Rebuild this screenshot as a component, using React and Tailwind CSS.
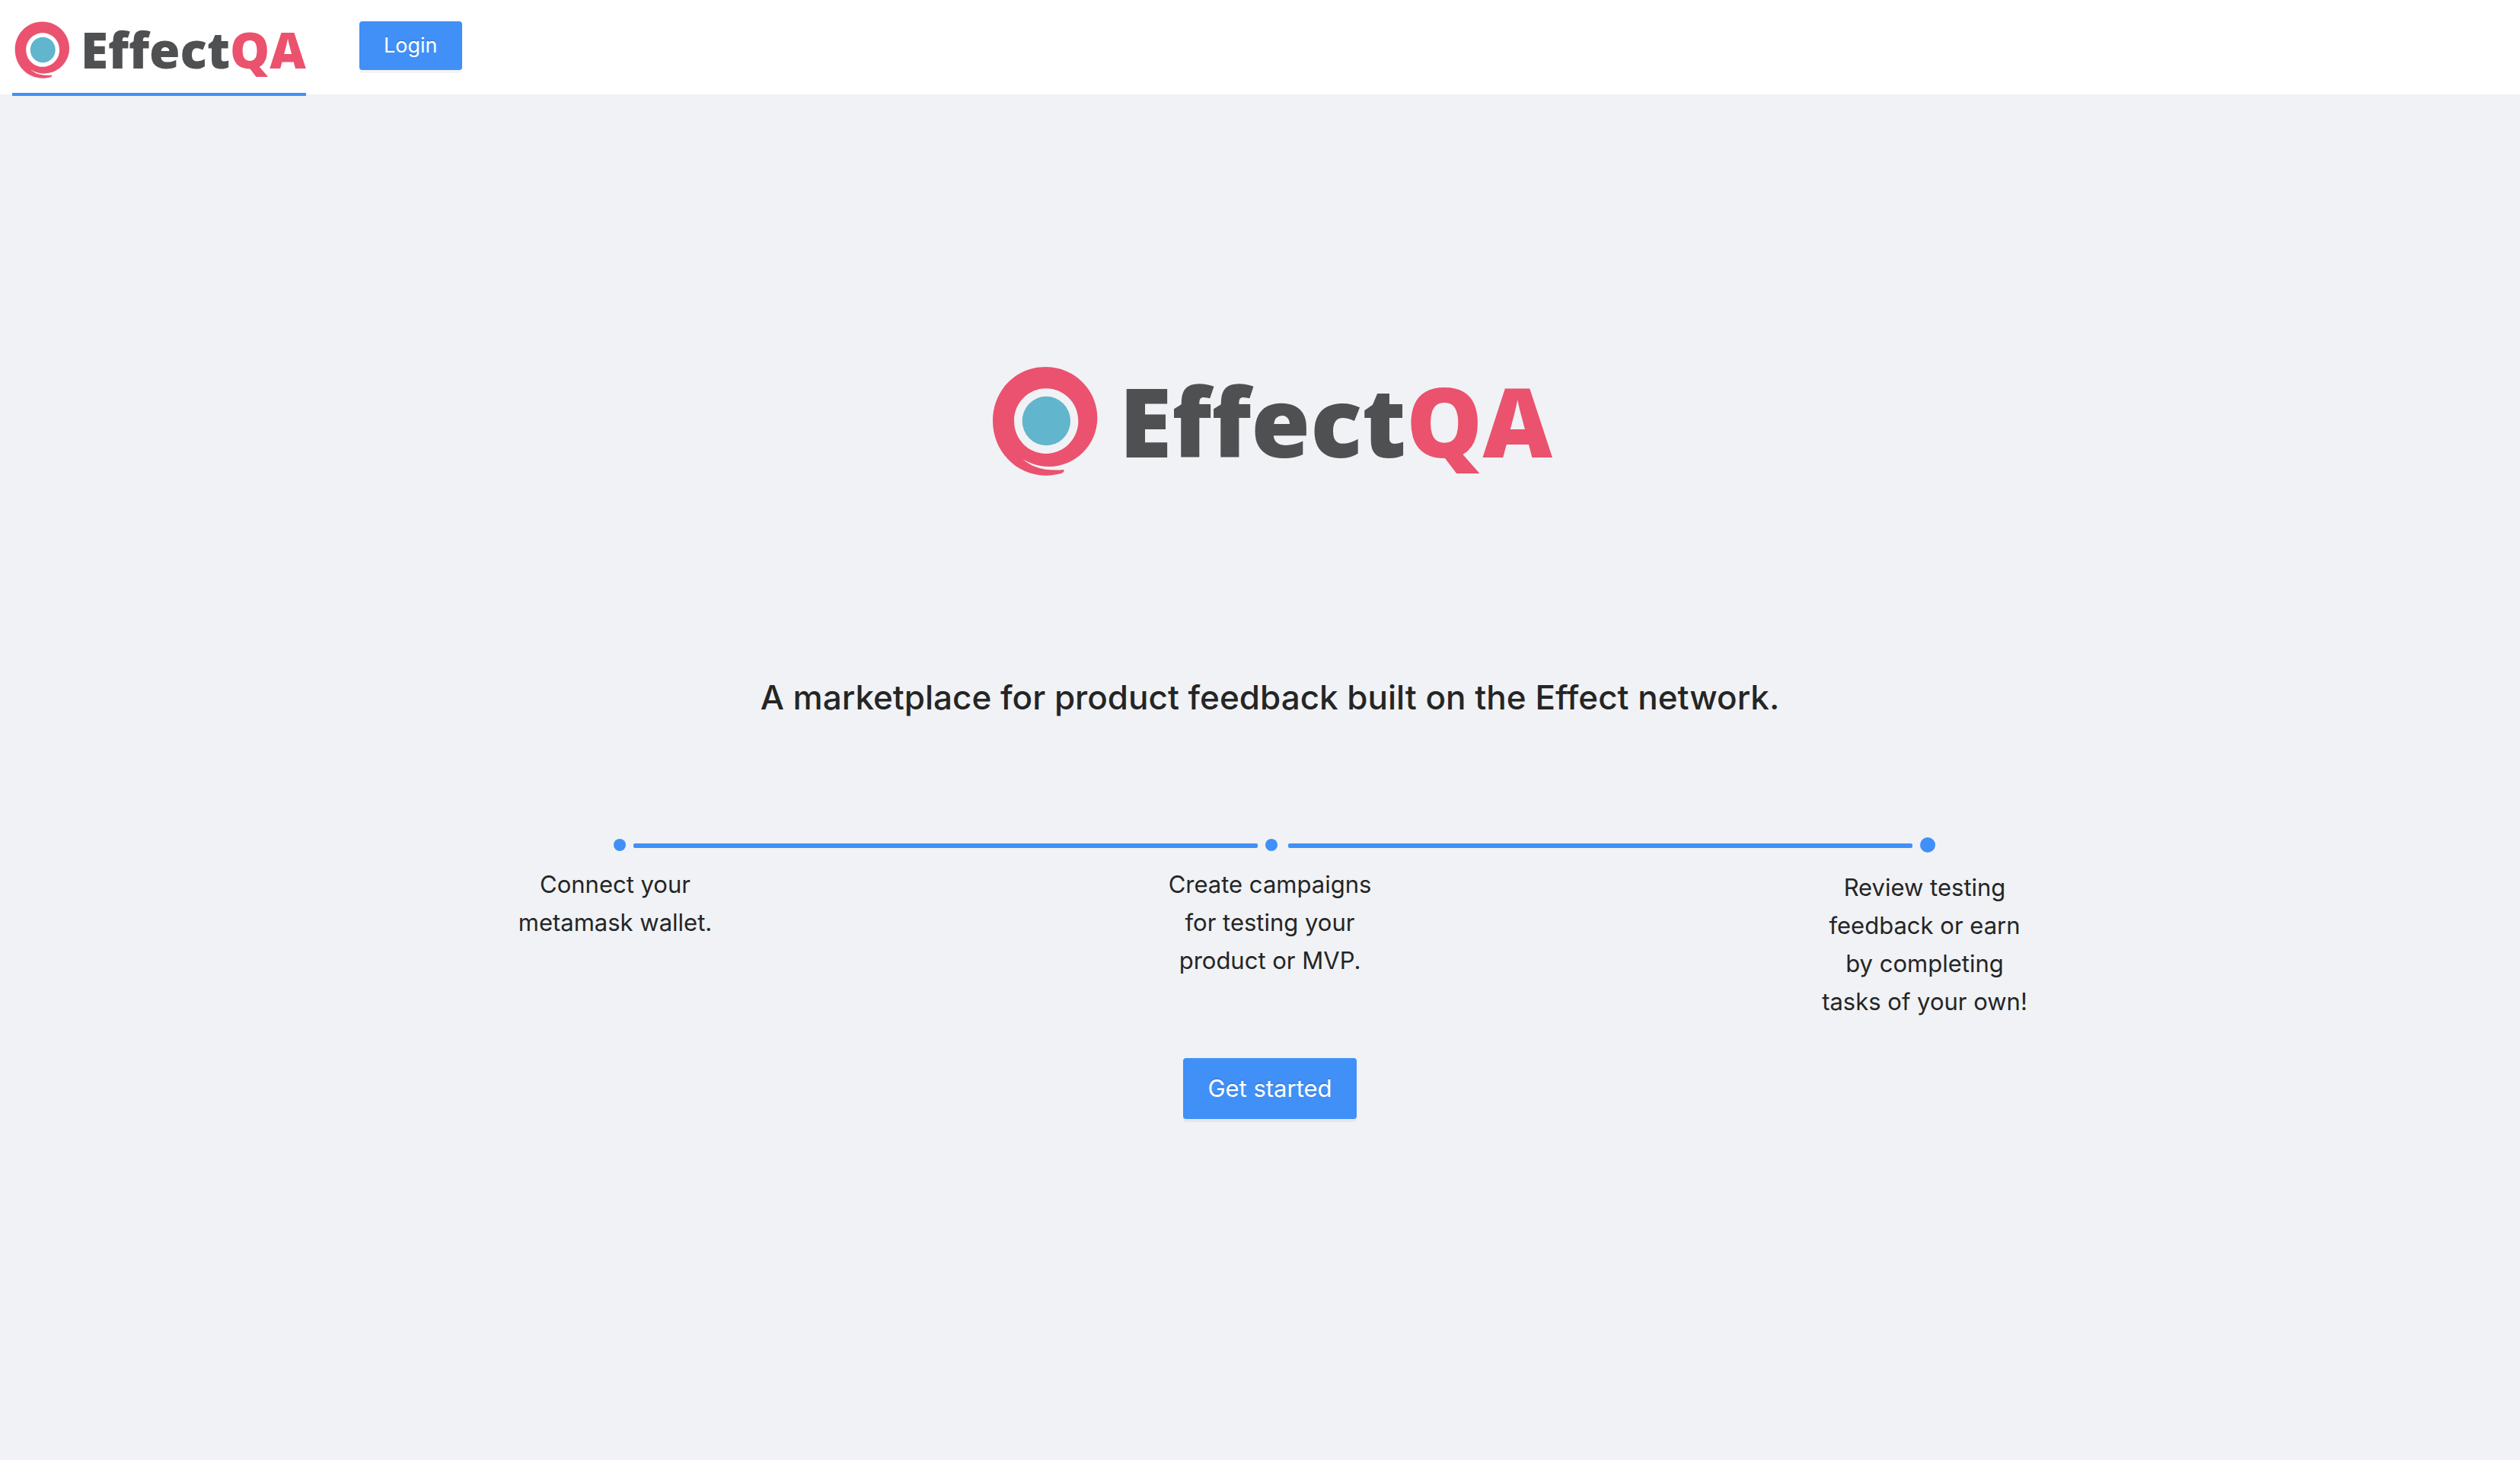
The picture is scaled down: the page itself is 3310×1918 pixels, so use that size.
function Logo({ className }) {
  return (
    <svg viewBox="0 0 742 146" className={className} role="img" aria-label="EffectQA">
      <g transform="scale(0.33333) translate(-53 -91)">
        <path
          fill="#eb526f"
          fillRule="evenodd"
          d="M354 499C357 508 350 512 340 515C320 520 302 522 282 522C165 520 74 425 74 306C74 187 165 94 282 94C396 94 486 185 486 295C486 401 400 487 295 487C255 486 217 474 192 456C225 490 285 506 354 499ZM284 179C214 179 158 236 158 307C158 378 214 436 284 436C354 436 411 378 411 307C411 236 354 179 284 179Z"
        />
        <ellipse cx="285" cy="307" rx="95" ry="97" fill="#61b5cd" />
      </g>
      <text x="173" y="120" className="font-['Open_Sans'] text-[126px] font-extrabold">
        <tspan fill="#4f5052">Effect</tspan>
        <tspan fill="#ea526e">QA</tspan>
      </text>
    </svg>
  );
}

const steps = ["Connect your metamask wallet.", "Create campaigns for testing your product or MVP."];

export default function App() {
  return (
    <div className="min-h-screen bg-[#f0f2f5] font-['Inter',sans-serif] text-[#252525]">
      <header className="flex h-[124px] items-start bg-white pl-4">
        <a href="#" className="flex h-[126px] w-[386px] flex-col justify-between border-b-4 border-[#4090f7] pt-7">
          <Logo className="w-full overflow-visible" />
        </a>
        <button className="mt-7 ml-[70px] h-16 rounded bg-[#4090f7] px-8 text-[27px] text-white shadow-[0_4px_0_rgba(0,0,0,0.045)] [text-shadow:0_-2px_0_rgba(0,0,0,0.12)]">
          Login
        </button>
      </header>

      <main className="flex flex-col items-center pt-[357px] pl-[26px]">
        <Logo className="w-[742px] overflow-visible" />
        <h1 className="mt-[253px] text-center text-[44px] leading-[72px] font-medium">
          A marketplace for product feedback built on the Effect network.
        </h1>

        <section className="mt-[148px] w-full max-w-[2000px]">
          <div className="flex items-start pr-[126px] pl-[138px]">
            <span className="mt-0.5 size-4 rounded-full bg-[#4090f7]" />
            <span className="mt-2 mr-2.5 ml-2.5 h-1.5 flex-1 rounded-xs bg-[#4090f7]" />
            <span className="mt-0.5 size-4 rounded-full bg-[#4090f7]" />
            <span className="mt-2 mr-2.5 ml-3.5 h-1.5 flex-1 rounded-xs bg-[#4090f7]" />
            <span className="size-5 rounded-full bg-[#4090f7]" />
          </div>
          <ol className="mt-[17px] flex justify-between text-center text-[31px] leading-[50px]">
            {steps.map((text) => (
              <li key={text} className="w-[280px]">
                {text}
              </li>
            ))}
            <li className="w-[280px] pt-1">Review testing feedback or earn by completing tasks of your own!</li>
          </ol>
        </section>

        <button className="mt-[49px] h-20 rounded bg-[#4090f7] px-8 text-[31px] text-white shadow-[0_4px_0_rgba(0,0,0,0.045)] [text-shadow:0_-2px_0_rgba(0,0,0,0.12)]">
          Get started
        </button>
      </main>
    </div>
  );
}
